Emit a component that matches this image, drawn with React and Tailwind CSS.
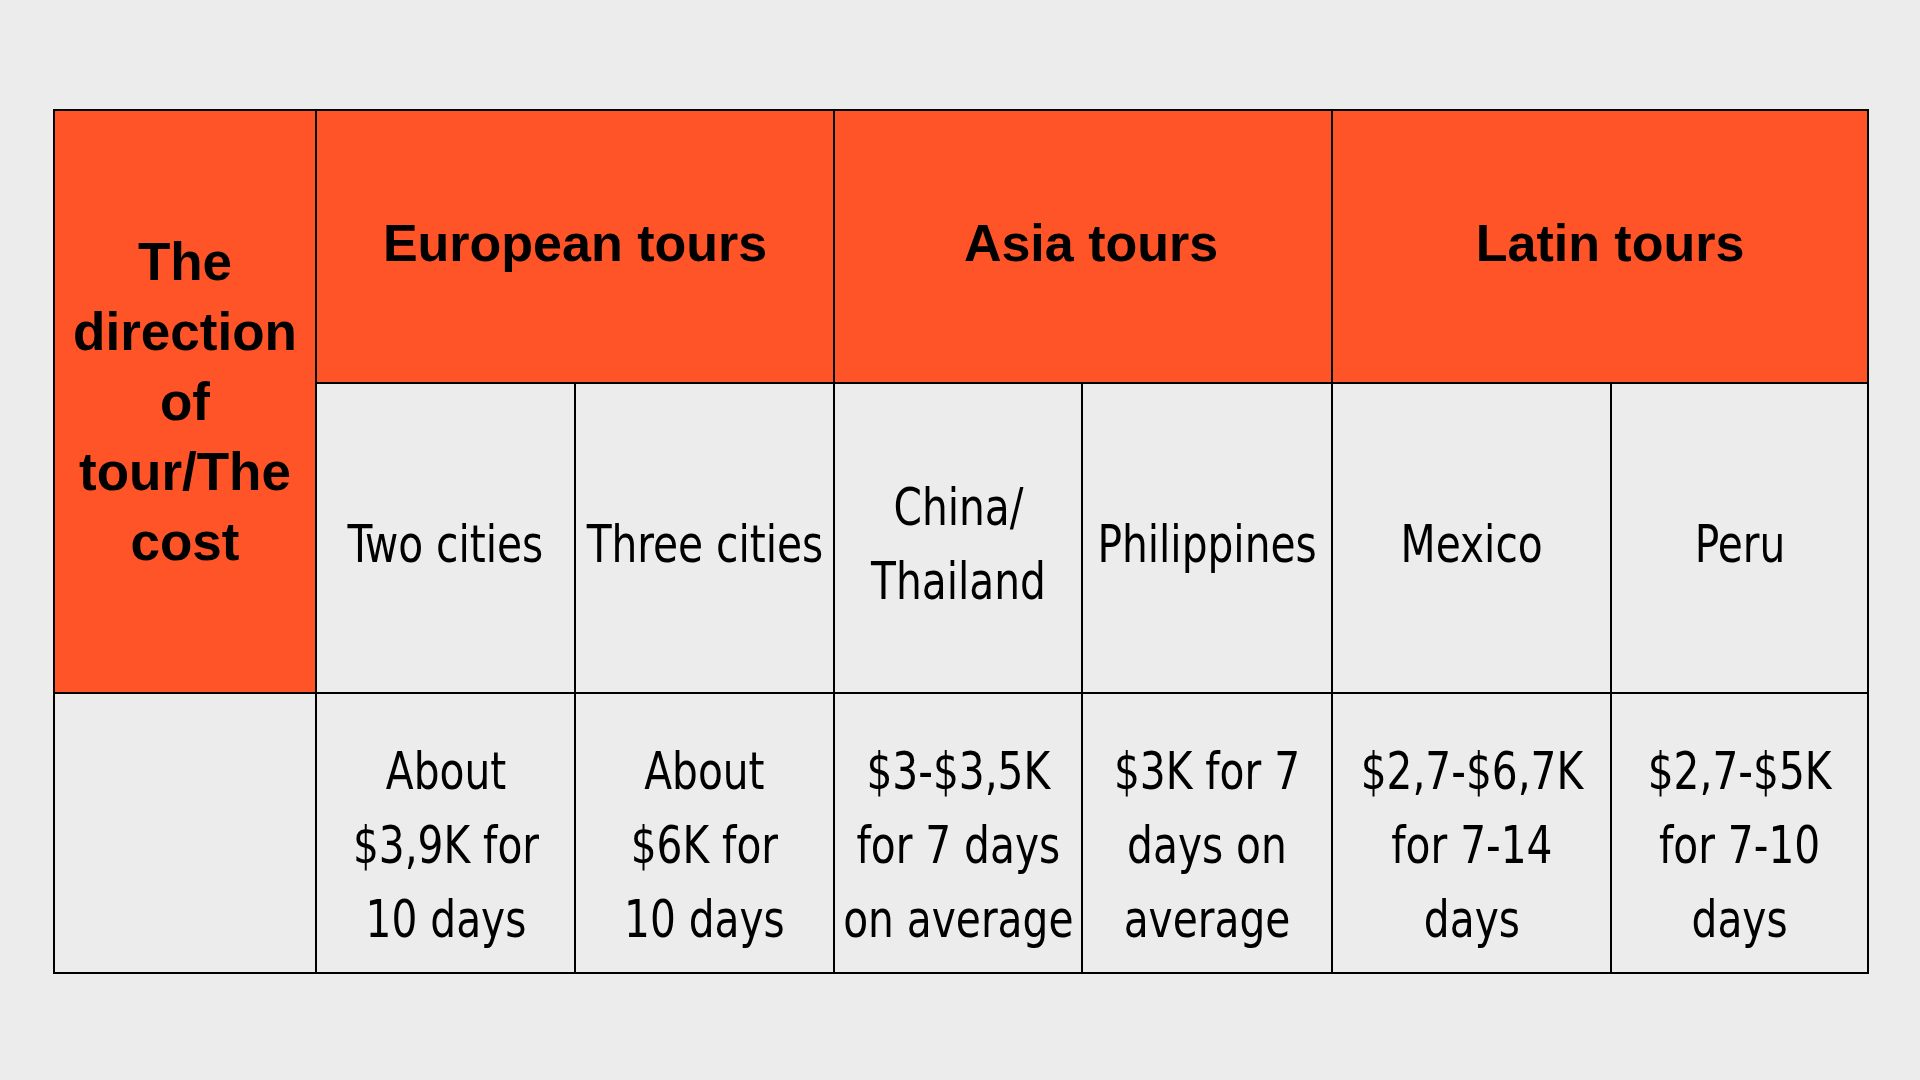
import React from 'react';

const head = "font-['Liberation_Sans',Arial,sans-serif] font-bold text-[52px] leading-[70px] text-black";
const body = "font-['DejaVu_Sans_Condensed','DejaVu_Sans',sans-serif] font-stretch-condensed text-[52px] leading-[74px] text-black whitespace-nowrap";

const cities = ['Two cities', 'Three cities', ['China/', 'Thailand'], 'Philippines', 'Mexico', 'Peru'];

const prices = [
  ['About', '$3,9K for', '10 days'],
  ['About', '$6K for', '10 days'],
  ['$3-$3,5K', 'for 7 days', 'on average'],
  ['$3K for 7', 'days on', 'average'],
  ['$2,7-$6,7K', 'for 7-14', 'days'],
  ['$2,7-$5K', 'for 7-10', 'days'],
];

// narrow the glyphs a bit more than DejaVu Condensed does
function Lines({ lines }) {
  const list = Array.isArray(lines) ? lines : [lines];
  return (
    <div className="flex justify-center">
      <span className="shrink-0 text-center scale-x-[0.87]">
        {list.map((l, i) => (
          <React.Fragment key={i}>
            {l}
            {i < list.length - 1 ? <br /> : null}
          </React.Fragment>
        ))}
      </span>
    </div>
  );
}

export default function App() {
  return (
    <div className="w-[1920px] h-[1080px] bg-[#ececec] pt-[109px] pl-[53px]">
      <table className="table-fixed border-collapse w-[1814px]">
        <colgroup>
          <col className="w-[262px]" />
          <col className="w-[259px]" />
          <col className="w-[259px]" />
          <col className="w-[248px]" />
          <col className="w-[250px]" />
          <col className="w-[279px]" />
          <col className="w-[257px]" />
        </colgroup>
        <tbody>
          {/* Region headers */}
          <tr className="h-[273px]">
            <td rowSpan={2} className={`bg-[#ff5428] border-2 border-black text-center align-middle px-0 !text-[53px] ${head}`}>
              The direction of tour/The cost
            </td>
            <td colSpan={2} className={`bg-[#ff5428] border-2 border-black text-center align-middle pb-2 ${head}`}>European tours</td>
            <td colSpan={2} className={`bg-[#ff5428] border-2 border-black text-center align-middle pb-2 pl-4 ${head}`}>Asia tours</td>
            <td colSpan={2} className={`bg-[#ff5428] border-2 border-black text-center align-middle pb-2 pl-5 ${head}`}>Latin tours</td>
          </tr>

          {/* Destinations */}
          <tr className="h-[310px]">
            {cities.map((c, i) => (
              <td key={i} className={`border-2 border-black align-middle pt-3 px-0 ${body}`}>
                <Lines lines={c} />
              </td>
            ))}
          </tr>

          {/* Prices */}
          <tr className="h-[280px]">
            <td className="border-2 border-black" />
            {prices.map((p, i) => (
              <td key={i} className={`border-2 border-black align-middle pt-6 px-0 ${body}`}>
                <Lines lines={p} />
              </td>
            ))}
          </tr>
        </tbody>
      </table>
    </div>
  );
}
